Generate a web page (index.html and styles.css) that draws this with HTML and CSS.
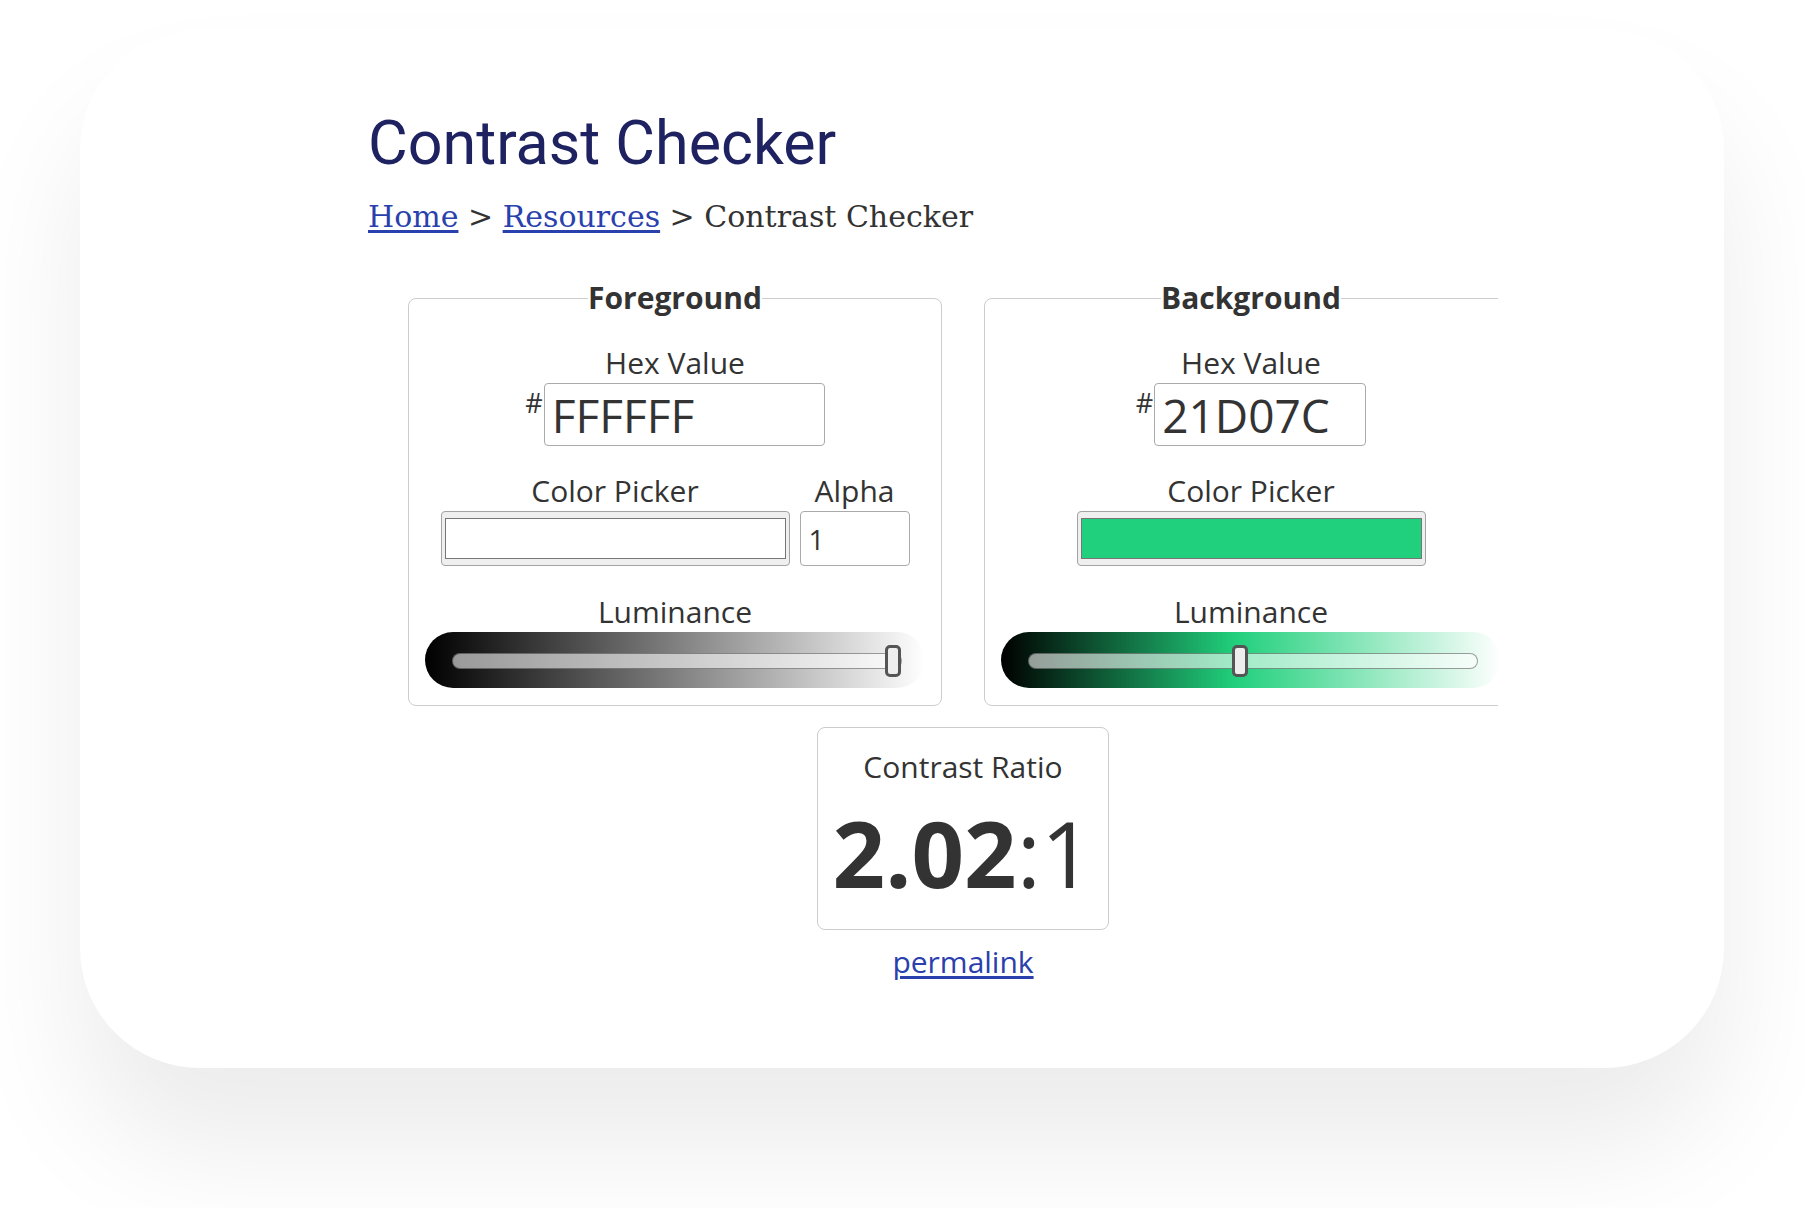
FILE: index.html
```html
<!DOCTYPE html>
<html lang="en">
<head>
<meta charset="utf-8">
<title>Contrast Checker</title>
<link rel="stylesheet" href="styles.css">
</head>
<body>
<div class="page">
  <main class="card">
    <div class="content">
      <h1 class="title">Contrast Checker</h1>
      <nav class="crumbs"><a href="#">Home</a> &gt; <a href="#">Resources</a> &gt; Contrast Checker</nav>
      <div class="tool">
        <div class="panels">
          <fieldset class="panel">
            <legend>Foreground</legend>
            <div class="field">
              <label class="lbl" for="fg-hex">Hex Value</label>
              <div class="hex-row"><span class="hash">#</span><input id="fg-hex" class="hex hex-fg" type="text" value="FFFFFF"></div>
            </div>
            <div class="pick-row">
              <div class="field">
                <label class="lbl" for="fg-pick">Color Picker</label>
                <input id="fg-pick" class="picker" type="color" value="#ffffff">
              </div>
              <div class="field">
                <label class="lbl" for="fg-alpha">Alpha</label>
                <input id="fg-alpha" class="alpha" type="text" value="1">
              </div>
            </div>
            <div class="field lum-field">
              <span class="lbl">Luminance</span>
              <div class="lum lum-fg"><div class="track"><span class="thumb" style="--v:1"></span></div></div>
            </div>
          </fieldset>
          <fieldset class="panel">
            <legend>Background</legend>
            <div class="field">
              <label class="lbl" for="bg-hex">Hex Value</label>
              <div class="hex-row"><span class="hash">#</span><input id="bg-hex" class="hex hex-bg" type="text" value="21D07C"></div>
            </div>
            <div class="pick-row">
              <div class="field">
                <label class="lbl" for="bg-pick">Color Picker</label>
                <input id="bg-pick" class="picker" type="color" value="#21d07c">
              </div>
            </div>
            <div class="field lum-field">
              <span class="lbl">Luminance</span>
              <div class="lum lum-bg"><div class="track"><span class="thumb" style="--v:0.47"></span></div></div>
            </div>
          </fieldset>
        </div>
        <div class="ratio">
          <div class="ratio-lbl">Contrast Ratio</div>
          <div class="ratio-val"><span class="ratio-num">2.02</span><span class="ratio-rest">:1</span></div>
        </div>
        <a class="permalink" href="#">permalink</a>
      </div>
    </div>
  </main>
</div>
</body>
</html>
```

FILE: styles.css
```css
html, body {
  margin: 0;
  padding: 0;
  background: #ffffff;
}

.page {
  width: 1804px;
  height: 1208px;
  padding: 30px 80px 0;
  box-sizing: border-box;
  overflow: hidden;
}

.card {
  display: block;
  background: #ffffff;
  border-radius: 120px;
  box-shadow: 0 80px 120px rgba(0, 0, 0, 0.08);
  padding: 77px 0 0 288px;
  box-sizing: border-box;
  height: 1038px;
}

.content {
  width: 1130px;
  overflow: hidden;
}

.title {
  margin: 0;
  font-family: Roboto, "Open Sans", sans-serif;
  font-weight: 400;
  font-size: 61px;
  line-height: 72px;
  color: #1e2260;
}

.crumbs {
  margin-top: 20px;
  font-family: "DejaVu Serif", "Liberation Serif", serif;
  font-size: 30px;
  line-height: 36px;
  color: #333333;
}

.crumbs a,
.permalink {
  color: #2a40ad;
  text-decoration: underline;
  text-underline-offset: 3px;
}

.tool {
  width: 1190px;
  display: flex;
  flex-direction: column;
  align-items: center;
  margin-top: 45px;
  font-family: "Open Sans", "Noto Sans", sans-serif;
  color: #333333;
}

.panels {
  display: flex;
  gap: 42px;
  padding: 0 40px;
}

.panel {
  width: 534px;
  box-sizing: border-box;
  margin: 0;
  min-width: 0;
  padding: 29px 16px 17px;
  border: 1px solid #cccccc;
  border-radius: 8px;
  display: flex;
  flex-direction: column;
  align-items: center;
}

.panel legend {
  margin: 0 auto;
  padding: 0;
  font-size: 30px;
  line-height: 36px;
  font-weight: 700;
  color: #333333;
}

.field {
  display: flex;
  flex-direction: column;
  align-items: center;
}

.lbl {
  font-size: 30px;
  line-height: 36px;
  margin-bottom: 2px;
  color: #333333;
}

.hex-row {
  display: flex;
  align-items: flex-start;
}

.hash {
  font-size: 27px;
  line-height: 27px;
  margin-top: 6px;
  margin-right: 1px;
  color: #333333;
}

.hex,
.alpha {
  font-family: "Open Sans", "Noto Sans", sans-serif;
  color: #333333;
  border: 1px solid #aaaaaa;
  border-radius: 4px;
  background: #ffffff;
  box-sizing: border-box;
  margin: 0;
  outline: none;
}

.hex {
  height: 63px;
  font-size: 46px;
  padding: 0 7px;
}

.hex-fg { width: 281px; }
.hex-bg { width: 212px; }

.pick-row {
  display: flex;
  justify-content: center;
  gap: 10px;
  margin-top: 27px;
}

.picker {
  -webkit-appearance: none;
  appearance: none;
  width: 349px;
  height: 55px;
  box-sizing: border-box;
  margin: 0;
  padding: 6px 3px;
  border: 1px solid #a3a3a3;
  border-radius: 4px;
  background: #efefef;
  cursor: pointer;
}

.picker::-webkit-color-swatch-wrapper {
  padding: 0;
}

.picker::-webkit-color-swatch {
  border: 1px solid #767676;
  border-radius: 0;
}

.alpha {
  width: 110px;
  height: 55px;
  font-size: 28px;
  padding: 0 8px;
}

.lum-field {
  align-self: stretch;
  margin-top: 28px;
}

.lum {
  align-self: stretch;
  height: 56px;
  border-radius: 28px;
  padding: 21px 23px 0 27px;
  box-sizing: border-box;
}

.lum-fg {
  background: linear-gradient(to right, #000000, #ffffff);
}

.lum-bg {
  background: linear-gradient(to right, #000000, #21d07c 47%, #ffffff);
}

.track {
  position: relative;
  height: 16px;
  box-sizing: border-box;
  border: 1px solid rgba(0, 0, 0, 0.38);
  border-radius: 8px;
  background: rgba(255, 255, 255, 0.58);
}

.thumb {
  position: absolute;
  top: 50%;
  left: calc(var(--v) * (100% - 16px));
  width: 16px;
  height: 32px;
  box-sizing: border-box;
  transform: translateY(-50%);
  border: 3px solid #555555;
  border-radius: 5px;
  background: #eeeeee;
}

.ratio {
  box-sizing: border-box;
  margin-top: 21px;
  padding: 21px 15px 8px;
  border: 1px solid #cccccc;
  border-radius: 8px;
  text-align: center;
}

.ratio-lbl {
  font-size: 30px;
  line-height: 36px;
}

.ratio-val {
  font-size: 92px;
  line-height: 136px;
  white-space: nowrap;
}

.ratio-num {
  font-weight: 700;
}

.ratio-rest {
  font-weight: 400;
}

.permalink {
  margin-top: 14px;
  font-size: 30px;
  line-height: 36px;
}
```
